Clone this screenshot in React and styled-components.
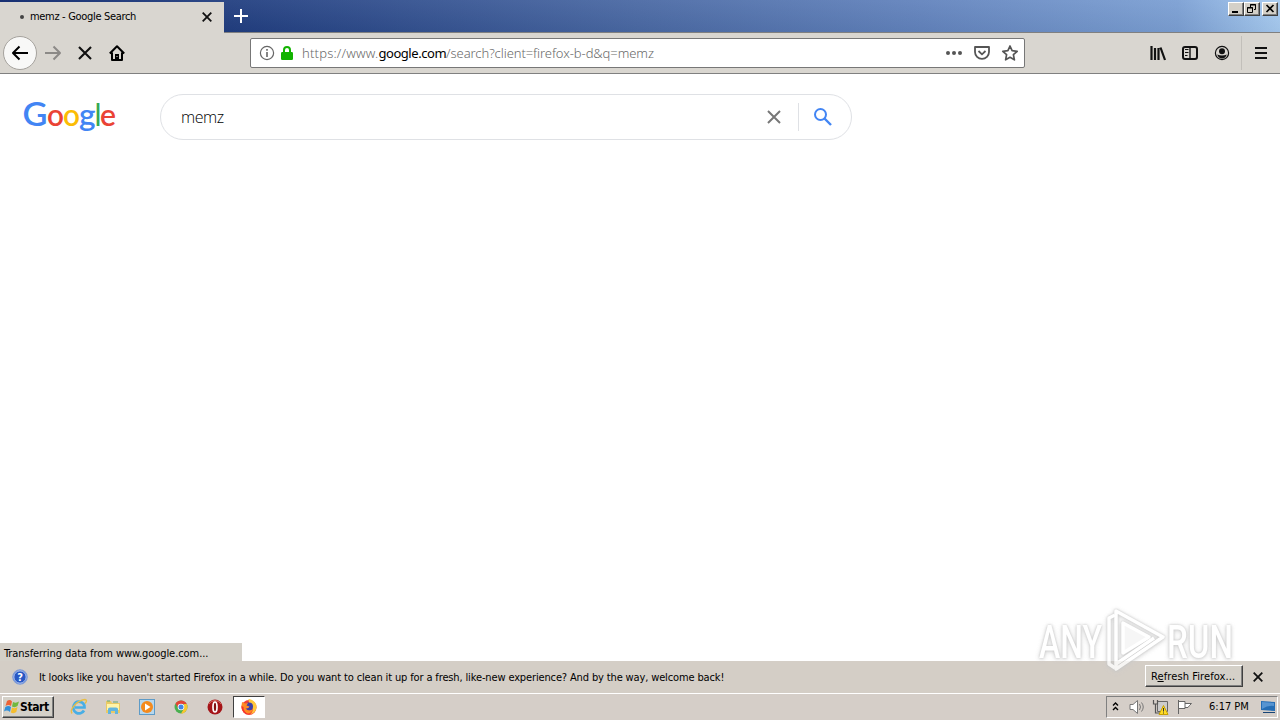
import React from 'react';
import styled, { createGlobalStyle, css } from 'styled-components';

const GlobalStyle = createGlobalStyle`
  * {
    box-sizing: border-box;
  }
  body {
    margin: 0;
    overflow: hidden;
    background: #fff;
    color: #000;
    font-family: 'DejaVu Sans Condensed', 'DejaVu Sans', sans-serif;
    font-size: 11px;
  }
  svg {
    display: block;
    flex: none;
    overflow: visible;
  }
`;

const Screen = styled.div`
  position: relative;
  display: flex;
  flex-direction: column;
  width: 1280px;
  height: 720px;
  overflow: hidden;
`;

const TitleBar = styled.header`
  display: flex;
  height: 33px;
  border-bottom: 1px solid #808080;
  background:
    linear-gradient(180deg, rgba(255, 255, 255, 0.06), rgba(0, 0, 0, 0.04)),
    linear-gradient(90deg, #0a246a 0%, #213e80 18%, #4a69a4 50%, #6283bd 72%, #7b9fd3 92%, #a6caf0 100%);
`;

const Tab = styled.div`
  display: flex;
  align-items: center;
  width: 224px;
  height: 31px;
  margin-top: 2px;
  padding: 0 12px 1px 20px;
  background: #d9d6d0;
`;

const Dot = styled.span`
  width: 4px;
  height: 4px;
  margin-right: 6px;
  border-radius: 50%;
  background: #444;
`;

const Label = styled.span`
  display: block;
  flex: none;
  width: ${({ $width }) => $width}px;
  white-space: nowrap;
  line-height: 16px;
  letter-spacing: ${({ $spacing = 0 }) => $spacing}px;
`;

const TabClose = styled.div`
  margin-left: auto;
`;

const NewTab = styled.div`
  display: flex;
  align-items: center;
  justify-content: center;
  width: 34px;
`;

const WindowButtons = styled.div`
  display: flex;
  margin: 2px 2px 0 auto;
`;

const raised = css`
  border: 1px solid;
  border-color: #fff #404040 #404040 #fff;
  box-shadow: inset -1px -1px 0 #808080;
  background: #d4d0c8;
`;

const WindowButton = styled.div`
  ${raised}
  width: 16px;
  height: 14px;
  margin-left: ${({ $gap = 0 }) => $gap}px;
`;

const NavBar = styled.nav`
  display: flex;
  align-items: center;
  height: 41px;
  padding: 0 13px 0 3px;
  border-bottom: 1px solid #808080;
  background: #d9d6d0;
`;

const BackButton = styled.div`
  display: flex;
  align-items: center;
  justify-content: center;
  width: 34px;
  height: 34px;
  border: 1px solid #a5a29d;
  border-radius: 50%;
  background: #f8f8f7;
`;

const NavIcon = styled.div`
  display: flex;
  justify-content: center;
  width: 32px;
`;

const UrlBar = styled.div`
  display: flex;
  align-items: center;
  width: 775px;
  height: 30px;
  margin-left: 117px;
  padding: 0 6px 0 8px;
  border: 1px solid #777;
  border-radius: 2px;
  background: #fff;
`;

const Url = styled.div`
  margin-left: 8px;
  color: #6a6a6a;
  font-family: 'Noto Sans', 'Open Sans', sans-serif;
  font-size: 13px;
  font-weight: 300;
  letter-spacing: -0.07px;
  white-space: nowrap;
`;

const Scheme = styled.span`
  letter-spacing: 0.2px;
`;

const Domain = styled.span`
  color: #000;
  font-weight: 400;
  letter-spacing: -0.45px;
`;

const UrlActions = styled.div`
  display: flex;
  gap: 12px;
  margin-left: auto;
`;

const ToolbarEnd = styled.div`
  display: flex;
  align-items: center;
  margin-left: auto;
`;

const Divider = styled.div`
  width: 1px;
  height: ${({ $height }) => $height}px;
  background: ${({ $color }) => $color};
`;

const Page = styled.main`
  display: flex;
  flex: 1;
  flex-direction: column;
  justify-content: space-between;
  background: #fff;
`;

const SearchHeader = styled.div`
  display: flex;
  padding: 20px 0 0 22px;
`;

const SearchBox = styled.div`
  display: flex;
  align-items: center;
  width: 692px;
  height: 46px;
  margin-left: 38px;
  padding: 0 18px 0 20px;
  border: 1px solid #dfe1e5;
  border-radius: 24px;
  font-family: 'Open Sans', 'Noto Sans', sans-serif;
  font-size: 16px;
  font-weight: 300;
  letter-spacing: -0.4px;
`;

const SearchActions = styled.div`
  display: flex;
  align-items: center;
  margin-left: auto;
`;

const SearchSlot = styled.div`
  margin-right: ${({ $right = 0 }) => $right}px;
  margin-left: ${({ $left = 0 }) => $left}px;
`;

const StatusPanel = styled.div`
  display: flex;
  align-items: center;
  width: 242px;
  height: 18px;
  padding: 3px 0 0 4px;
  background: #d4d0c8;
`;

const Notification = styled.div`
  display: flex;
  align-items: center;
  height: 32px;
  padding: 0 17px 0 12px;
  background: #d4cec6;
`;

const NotificationText = styled.div`
  margin-left: 11px;
  padding-top: 1px;
`;

const RefreshButton = styled.div`
  ${raised}
  display: flex;
  justify-content: center;
  width: 98px;
  height: 22px;
  margin: -2px 10px 0 auto;
  padding-top: 3px;
`;

const Taskbar = styled.footer`
  display: flex;
  align-items: center;
  height: 27px;
  padding: 0 2px;
  border-top: 1px solid #fff;
  background: #d5cec8;
`;

const StartButton = styled.div`
  ${raised}
  display: flex;
  align-items: center;
  width: 52px;
  height: 22px;
  padding-left: 1px;
  font-size: 12px;
  font-weight: bold;
`;

const Shortcuts = styled.div`
  display: flex;
  align-items: center;
  margin-left: 8px;
`;

const Shortcut = styled.div`
  display: flex;
  align-items: center;
  justify-content: center;
  width: 34px;
  height: 22px;
`;

const ActiveTask = styled(Shortcut)`
  width: 32px;
  margin-left: 1px;
  border: 1px solid;
  border-color: #404040 #fff #fff #404040;
  background: #fff;
`;

const Tray = styled.div`
  display: flex;
  align-items: center;
  width: 172px;
  height: 22px;
  margin-left: auto;
  padding-left: 5px;
  border: 1px solid;
  border-color: #808080 #fff #fff #808080;
`;

const TrayItem = styled.div`
  margin-left: ${({ $left = 0 }) => $left}px;
`;

const Watermark = styled.div`
  position: absolute;
  top: 603px;
  left: 1032px;
  opacity: 0.8;

  svg {
    filter: drop-shadow(0 0 1px #bbb) drop-shadow(0 1px 2px #ccc);
  }
`;

const Cross = ({ size = 10, color = '#111', width = 1.8 }) => (
  <svg width={size} height={size} viewBox="0 0 10 10">
    <path d="M.7.7l8.6 8.6M9.3.7L.7 9.3" stroke={color} strokeWidth={width} />
  </svg>
);

const Arrow = ({ color, flip }) => (
  <svg width="18" height="16" viewBox="0 0 18 16">
    <path
      d="M17 8H2M8.5 1.5L2 8l6.5 6.5"
      transform={flip ? 'matrix(-1 0 0 1 18 0)' : undefined}
      fill="none"
      stroke={color}
      strokeWidth="2"
      strokeLinejoin="round"
    />
  </svg>
);

const Home = () => (
  <svg width="16" height="16" viewBox="0 0 16 16">
    <path d="M.8 8.5L8 1.3l7.2 7.2M3 7.5V15h10V7.5" fill="none" stroke="#000" strokeWidth="2" strokeLinejoin="round" />
    <path d="M6 9h4v6H6z" />
    <path d="M7.5 11h1v1h-1z" fill="#d9d6d0" />
  </svg>
);

const Info = () => (
  <svg width="16" height="16" viewBox="0 0 16 16" fill="none" stroke="#666">
    <circle cx="8" cy="8" r="6.6" strokeWidth="1.2" />
    <path d="M8 7v5M8 4v1.7" strokeWidth="1.6" />
  </svg>
);

const Lock = () => (
  <svg width="14" height="16" viewBox="0 0 14 16">
    <path d="M4 8V5a3 3 0 016 0v3" fill="none" stroke="#12b300" strokeWidth="2" />
    <rect x="1" y="7" width="12" height="8" rx="1.2" fill="#12b300" />
  </svg>
);

const Dots = () => (
  <svg width="16" height="16" fill="#555">
    <circle cx="2" cy="8" r="2" />
    <circle cx="8" cy="8" r="2" />
    <circle cx="14" cy="8" r="2" />
  </svg>
);

const Pocket = () => (
  <svg width="16" height="16" fill="none" stroke="#555" strokeWidth="1.8">
    <path d="M1 2h14v5a7 6.8 0 01-14 0z" strokeLinejoin="round" />
    <path d="M4.5 6L8 9.3 11.5 6" />
  </svg>
);

const Star = () => (
  <svg width="16" height="16" fill="none" stroke="#555" strokeWidth="1.7" strokeLinejoin="round">
    <path d="M8 1l2.1 4.7 5.1.6-3.8 3.4 1 5.1L8 12.300l-4.400 2.500 1-5.100L.8 6.300l5.100-.6z" />
  </svg>
);

const Library = () => (
  <svg width="16" height="16" stroke="#111" strokeWidth="2.2">
    <path d="M1.500 1v14M5 3v12M8.500 3v12M10.500 2.500L15 15" />
  </svg>
);

const Sidebar = () => (
  <svg width="16" height="16" fill="none" stroke="#111">
    <rect x="1" y="2" width="14" height="12" rx="2" strokeWidth="2" />
    <path d="M8 2v12" strokeWidth="1.4" />
    <path d="M3 4.500h3.500M3 7.500h3.500M3 10.500h2.500" />
  </svg>
);

const Account = () => (
  <svg width="16" height="16">
    <circle cx="8" cy="8" r="6.6" fill="none" stroke="#111" strokeWidth="1.2" />
    <circle cx="8" cy="6.2" r="3" fill="#111" />
    <path d="M3.200 9.500q4.800 2 9.600 0Q11.500 13.500 8 13.500T3.200 9.500z" fill="#111" />
  </svg>
);

const Menu = () => (
  <svg width="12" height="14" stroke="#111" strokeWidth="2">
    <path d="M0 2h12M0 7h12M0 12h12" />
  </svg>
);

const GoogleLogo = () => (
  <svg width="100" height="46" fontFamily="Lato, sans-serif" fontSize="31" fontWeight="600">
    <text x="0.5" y="32" fill="#4285f4" fontSize="33" textLength="25" lengthAdjust="spacingAndGlyphs">G</text>
    <text x="25" y="32" fill="#ea4335" textLength="17" lengthAdjust="spacingAndGlyphs">o</text>
    <text x="41" y="32" fill="#fbbc05" textLength="17" lengthAdjust="spacingAndGlyphs">o</text>
    <text x="57" y="32" fill="#4285f4" textLength="16.5" lengthAdjust="spacingAndGlyphs">g</text>
    <text x="73" y="32" fill="#34a853" textLength="6" lengthAdjust="spacingAndGlyphs">l</text>
    <text x="78" y="32" fill="#ea4335" textLength="16" lengthAdjust="spacingAndGlyphs">e</text>
  </svg>
);

const Magnifier = () => (
  <svg width="20" height="20" fill="none" stroke="#4285f4" strokeWidth="2">
    <circle cx="7.5" cy="7.5" r="5.5" />
    <path d="M11.5 11.5l6.5 6.5" strokeWidth="2.4" />
  </svg>
);

const Help = () => (
  <svg width="16" height="16">
    <circle cx="8" cy="8" r="7.3" fill="#2858c4" stroke="#8ba4d6" />
    <circle cx="8" cy="8" r="6.2" fill="none" stroke="#e4edff" strokeWidth=".8" />
    <text x="8" y="12" fill="#fff" fontSize="11" fontWeight="bold" textAnchor="middle">?</text>
  </svg>
);

const WindowsFlag = () => (
  <svg width="16" height="16">
    <path d="M3 2q3-2 5 .5L7 7Q4.500 5 1.500 7z" fill="#ed6336" />
    <path d="M9 3q3 1.500 6-.5L13.500 7Q11 9 8 7.500z" fill="#71b83f" />
    <path d="M1.300 8Q4.500 6 7 8l-1 5q-3-2.500-6-.5z" fill="#328fd9" />
    <path d="M8 8.500q3 1.500 5.500-.5L12.300 13q-2.500 2-5.500.5z" fill="#f5bd2e" />
  </svg>
);

const Explorer = () => (
  <svg width="18" height="18" fill="none">
    <path d="M14 12.500A5.500 5.500 0 114 7a5.500 5.500 0 0110.500 2.500H5" stroke="#48aee5" strokeWidth="2.7" />
    <path d="M2 15.500C-1 11 8 2 15 1.500q3 .5 0 4" stroke="#e8bd45" strokeWidth="1.4" />
  </svg>
);

const Folder = () => (
  <svg width="18" height="18">
    <path d="M2 3h5l1 2h8v10H2z" fill="#e9ca65" />
    <path d="M3 6h12v6H3z" fill="#fff4a9" />
    <path d="M4 16v-5q0-1.500 2-1.500h6q2 0 2 1.500v5h-3v-3H7v3z" fill="#62b5df" />
    <path d="M3 3h3M9 4h5" stroke="#64a977" />
  </svg>
);

const MediaPlayer = () => (
  <svg width="18" height="18">
    <rect x="1.5" y="1.5" width="15" height="15" fill="#b7d7ed" stroke="#5e9bc7" />
    <circle cx="9" cy="9" r="6" fill="#f48a1d" />
    <path d="M7 5.500v7L12.500 9z" fill="#fff" />
  </svg>
);

const Chrome = () => (
  <svg width="16" height="16">
    <circle cx="8" cy="8" r="6.5" fill="#4aaf50" />
    <path d="M2.500 4.500A6.500 6.500 0 0113.700 5H8L5 9z" fill="#e44436" />
    <path d="M13.700 5A6.500 6.500 0 018 14.500l3-5V5z" fill="#f9c62e" />
    <circle cx="8" cy="8" r="3.3" fill="#fff" />
    <circle cx="8" cy="8" r="2.5" fill="#4285e5" />
  </svg>
);

const Opera = () => (
  <svg width="16" height="16">
    <circle cx="8" cy="8" r="7.5" fill="#a51418" />
    <path d="M2 5a7 7 0 0112 0" stroke="#db6b63" fill="none" />
    <ellipse cx="8" cy="8" rx="2" ry="5" fill="#821010" stroke="#fff" strokeWidth="1.7" />
  </svg>
);

const Firefox = () => (
  <svg width="18" height="18">
    <circle cx="9" cy="9.5" r="7.5" fill="#f5402f" />
    <path d="M9 1q8 2 7.500 9-1 5-6 6 4-4 1-7-3-3-3-8z" fill="#ffc83b" />
    <circle cx="9" cy="8.5" r="4" fill="#3d3fa8" />
    <path d="M2 4l3 1.500L8 5 6.500 7.500l3 1q-1 2.500-4 2 3 3.500 7 1-1 4-5 4-6-1-6-7z" fill="#ff8a22" />
    <path d="M1.500 8q0 7 7 8.500Q3 13 3.500 9z" fill="#f5302f" />
  </svg>
);

const Chevron = () => (
  <svg width="7" height="10" fill="none" stroke="#000" strokeWidth="1.4">
    <path d="M1 3.500L3.500 1 6 3.500M1 8L3.500 5.500 6 8" />
  </svg>
);

const Speaker = () => (
  <svg width="16" height="16" fill="none" stroke="#777">
    <path d="M1 5.500h3L8.500 1.500v13L4 10.500H1z" fill="#fff" />
    <path d="M10.500 5q2 3 0 6M12.500 3.500q3.500 4.500 0 9" />
  </svg>
);

const Network = () => (
  <svg width="17" height="17">
    <path d="M5.500 2.500h10v10h-10z" fill="#ccc" stroke="#666" />
    <path d="M1.500 1v4h4V1M3.500 5v9H8" fill="none" stroke="#555" strokeWidth="1.2" />
    <path d="M11.500 6.500l4.500 9H7z" fill="#ffdc24" stroke="#c7a000" />
    <path d="M11.500 9v3.500M11.500 13.500v1" stroke="#333" />
  </svg>
);

const Flag = () => (
  <svg width="17" height="16" fill="#fff" stroke="#666">
    <path d="M2.500 1v14M3 2.500h6v7H3M9 4.500h6.500l-2 2-1.500 2H9" />
  </svg>
);

const Desktop = () => (
  <svg width="16" height="16">
    <path d="M1 2l14 1v9L1 11z" fill="#246db5" />
    <path d="M2 3l12 1v3Q8 6 2 10z" fill="#5694d1" />
    <path d="M3 13h12v1H3z" fill="#184475" />
  </svg>
);

const AnyRunLogo = () => (
  <svg width="220" height="80" fontFamily="Roboto, sans-serif" fontSize="46" fontWeight="500">
    <g fill="#fff">
      <text x="7" y="55" textLength="63" lengthAdjust="spacingAndGlyphs">ANY</text>
      <text x="135" y="55" textLength="66" lengthAdjust="spacingAndGlyphs">RUN</text>
    </g>
    <g fill="none" stroke="#fff" strokeWidth="3.5" strokeLinejoin="round">
      <path d="M84 61V8l47 26-47 32v-5l38-26" />
      <path d="M91 20v30l26-16z" fill="#f4f4f4" />
      <path d="M83 12l-6 3v46l6 4" />
    </g>
  </svg>
);

export default function App() {
  return (
    <Screen>
      <GlobalStyle />
      <TitleBar>
        <Tab>
          <Dot />
          <Label $width={110} $spacing={-0.32}>
            memz - Google Search
          </Label>
          <TabClose>
            <Cross size={10} />
          </TabClose>
        </Tab>
        <NewTab>
          <svg width="14" height="14" stroke="#fff" strokeWidth="2">
            <path d="M0 7h14M7 0v14" />
          </svg>
        </NewTab>
        <WindowButtons>
          <WindowButton>
            <svg width="14" height="12">
              <path d="M3 8h6v2H3z" />
            </svg>
          </WindowButton>
          <WindowButton>
            <svg width="14" height="12" fill="none" stroke="#000">
              <path d="M5.500 4V1.500h5v5H9M5 2h6M2.500 4.500h5v5h-5zM2 5h6" />
            </svg>
          </WindowButton>
          <WindowButton $gap={2}>
            <svg width="14" height="12" stroke="#000" strokeWidth="1.7">
              <path d="M3.500 2l7 7M10.500 2l-7 7" />
            </svg>
          </WindowButton>
        </WindowButtons>
      </TitleBar>
      <NavBar>
        <BackButton>
          <Arrow color="#000" />
        </BackButton>
        <NavIcon>
          <Arrow color="#8c8a87" flip />
        </NavIcon>
        <NavIcon>
          <Cross size={14} width={1.5} />
        </NavIcon>
        <NavIcon>
          <Home />
        </NavIcon>
        <UrlBar>
          <Info />
          <SearchSlot $left={5}>
            <Lock />
          </SearchSlot>
          <Url>
            <Scheme>https://www.</Scheme>
            <Domain>google.com</Domain>
            /search?client=firefox-b-d&amp;q=memz
          </Url>
          <UrlActions>
            <Dots />
            <Pocket />
            <Star />
          </UrlActions>
        </UrlBar>
        <ToolbarEnd>
          <NavIcon>
            <Library />
          </NavIcon>
          <NavIcon>
            <Sidebar />
          </NavIcon>
          <NavIcon>
            <Account />
          </NavIcon>
          <SearchSlot $left={3} $right={13}>
            <Divider $height={34} $color="#c2bfba" />
          </SearchSlot>
          <Menu />
        </ToolbarEnd>
      </NavBar>
      <Page>
        <SearchHeader>
          <GoogleLogo />
          <SearchBox>
            memz
            <SearchActions>
              <Cross size={14} color="#777" width={1.4} />
              <SearchSlot $left={17} $right={14}>
                <Divider $height={28} $color="#dfe1e5" />
              </SearchSlot>
              <Magnifier />
            </SearchActions>
          </SearchBox>
        </SearchHeader>
        <StatusPanel>
          <Label $width={205} $spacing={-0.07}>
            Transferring data from www.google.com...
          </Label>
        </StatusPanel>
      </Page>
      <Notification>
        <Help />
        <NotificationText>
          <Label $width={685} $spacing={-0.137}>
            It looks like you haven't started Firefox in a while. Do you want to clean it up for a fresh, like-new
            experience? And by the way, welcome back!
          </Label>
        </NotificationText>
        <RefreshButton>
          <Label $width={86} $spacing={0.1}>
            R<u>e</u>fresh Firefox...
          </Label>
        </RefreshButton>
        <Cross size={10} />
      </Notification>
      <Taskbar>
        <StartButton>
          <WindowsFlag />
          <Label $width={30} $spacing={-0.4}>
            Start
          </Label>
        </StartButton>
        <Shortcuts>
          <Shortcut>
            <Explorer />
          </Shortcut>
          <Shortcut>
            <Folder />
          </Shortcut>
          <Shortcut>
            <MediaPlayer />
          </Shortcut>
          <Shortcut>
            <Chrome />
          </Shortcut>
          <Shortcut>
            <Opera />
          </Shortcut>
          <ActiveTask>
            <Firefox />
          </ActiveTask>
        </Shortcuts>
        <Tray>
          <Chevron />
          <TrayItem $left={10}>
            <Speaker />
          </TrayItem>
          <TrayItem $left={7}>
            <Network />
          </TrayItem>
          <TrayItem $left={7}>
            <Flag />
          </TrayItem>
          <TrayItem $left={16}>
            <Label $width={40}>6:17 PM</Label>
          </TrayItem>
          <TrayItem $left={11}>
            <Desktop />
          </TrayItem>
        </Tray>
      </Taskbar>
      <Watermark>
        <AnyRunLogo />
      </Watermark>
    </Screen>
  );
}
